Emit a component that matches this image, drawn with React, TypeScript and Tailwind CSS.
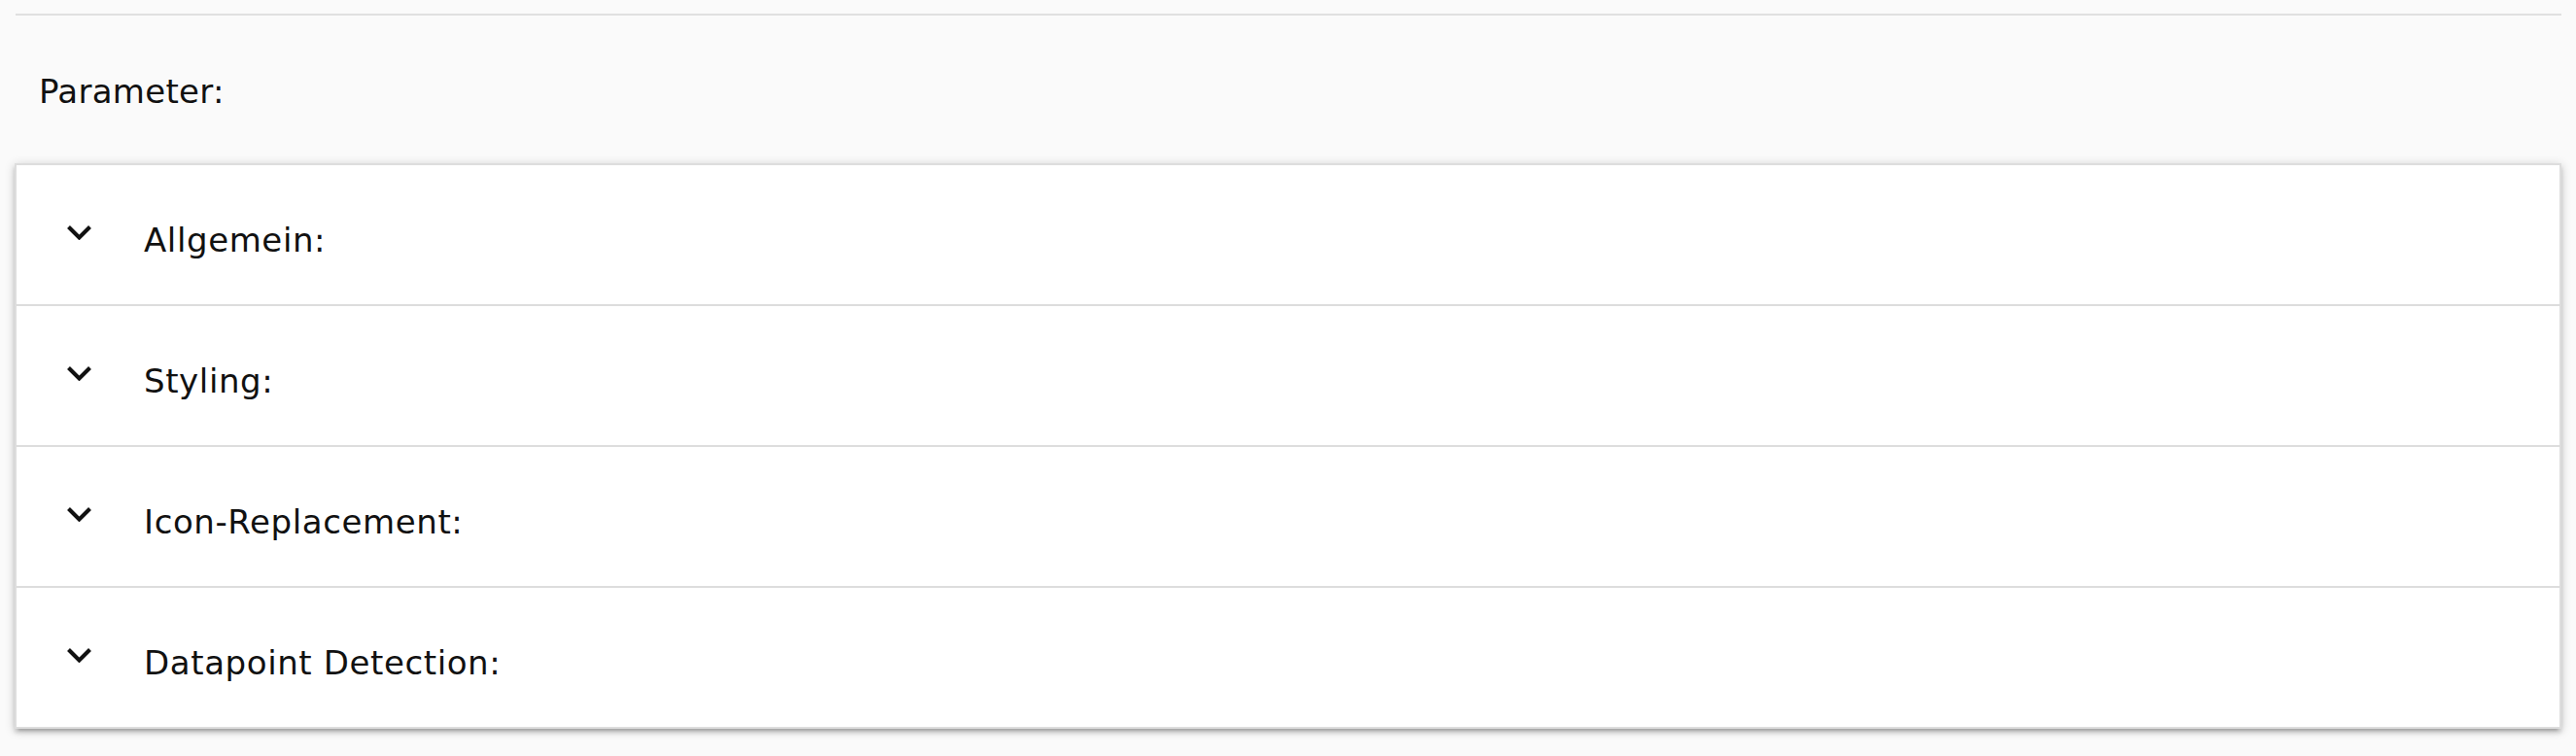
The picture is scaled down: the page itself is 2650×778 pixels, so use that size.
import React from "react";

const sections = ["Allgemein:", "Styling:", "Icon-Replacement:", "Datapoint Detection:"];

function Chevron() {
  return (
    <svg
      width="25"
      height="15.4"
      viewBox="6 8.59 12 7.41"
      className="shrink-0 mb-[4px]"
      fill="#111"
    >
      <path d="M16.59 8.59L12 13.17 7.41 8.59 6 10l6 6 6-6z" />
    </svg>
  );
}

export default function App() {
  return (
    <div
      className="min-h-screen bg-[#fafafa] px-[15px] text-[#111]"
      style={{ fontFamily: '"DejaVu Sans", "Liberation Sans", sans-serif' }}
    >
      <div className="pt-[14px]">
        <div className="ml-[1px] h-[2px] bg-[#e0e0e0]" />
      </div>
      <div className="pt-[58px] pb-[54px] pl-[25px]">
        <div className="h-[40px] text-[34px] leading-[40px] tracking-[0.3px]">Parameter:</div>
      </div>
      <div className="border-x-2 border-t-2 border-[#dddddd] bg-white shadow-[0_4px_4px_0_rgba(0,0,0,0.14),0_6px_2px_-4px_rgba(0,0,0,0.12),0_2px_10px_0_rgba(0,0,0,0.2)]">
        {sections.map((s) => (
          <div
            key={s}
            className="flex h-[145px] items-center border-b-2 border-[#dddddd] pl-[52px]"
          >
            <Chevron />
            <span className="ml-[54px] mt-[10px] text-[34px] leading-[40px] tracking-[0.6px]">{s}</span>
          </div>
        ))}
      </div>
    </div>
  );
}
